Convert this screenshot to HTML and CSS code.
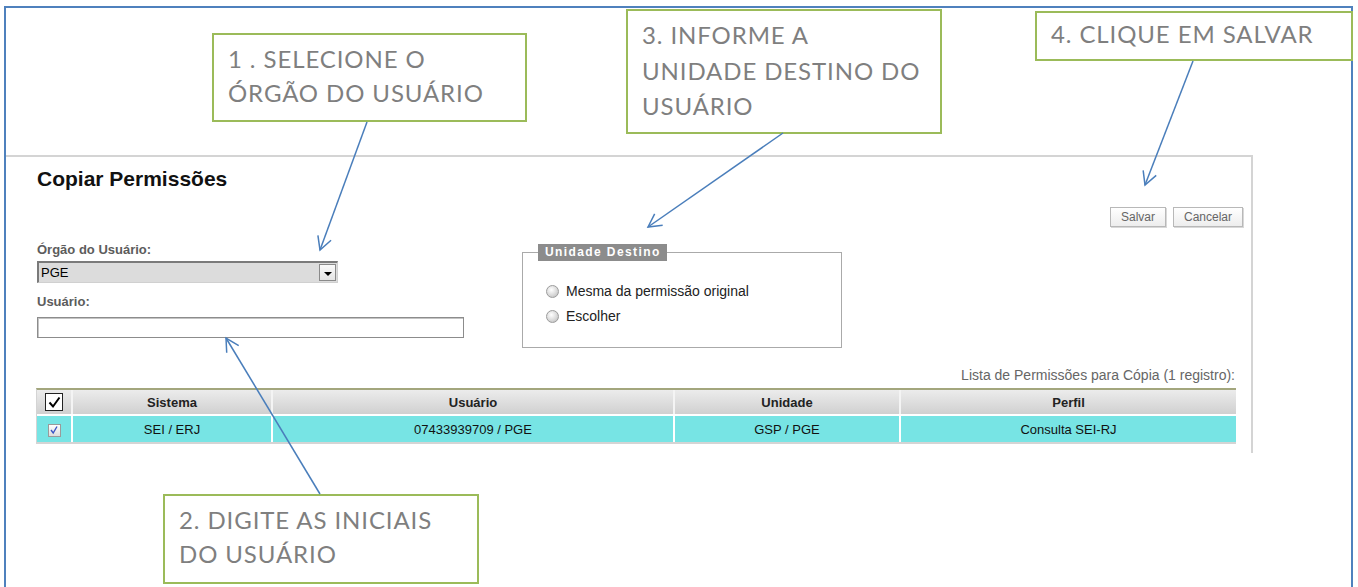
FILE: index.html
```html
<!DOCTYPE html>
<html lang="pt-BR">
<head>
  <meta charset="UTF-8" />
  <title>Copiar Permissões</title>
  <link rel="stylesheet" href="styles.css">
</head>
<body>
  <div class="sheet">
    <div class="frame">
      <div class="page">
        <h1 class="title">Copiar Permissões</h1>

        <div class="top">
          <div class="fields">
            <label class="label">Órgão do Usuário:</label>
            <div class="select">
              <span class="select-value">PGE</span>
              <span class="select-btn"><span class="caret"></span></span>
            </div>
            <label class="label label-user">Usuário:</label>
            <input type="text" class="text-input" />
          </div>

          <fieldset class="destino">
            <legend>Unidade Destino</legend>
            <div class="option"><span class="radio"></span>Mesma da permissão original</div>
            <div class="option"><span class="radio"></span>Escolher</div>
          </fieldset>

          <div class="actions">
            <button class="btn">Salvar</button>
            <button class="btn">Cancelar</button>
          </div>
        </div>

        <div class="caption">Lista de Permissões para Cópia (1 registro):</div>

        <table class="grid">
          <thead>
            <tr>
              <th class="col-check">
                <span class="check-big">
                  <svg width="15" height="15" viewBox="0 0 15 15"><path d="M2.5 7.5 L6 11.5 L12.5 2.5" fill="none" stroke="#000" stroke-width="2"/></svg>
                </span>
              </th>
              <th class="col-sistema">Sistema</th>
              <th class="col-usuario">Usuário</th>
              <th class="col-unidade">Unidade</th>
              <th>Perfil</th>
            </tr>
          </thead>
          <tbody>
            <tr>
              <td>
                <span class="check-small">
                  <svg width="10" height="10" viewBox="0 0 10 10"><path d="M2 5 L4.2 8 L8 1.5" fill="none" stroke="#3b55c4" stroke-width="1.4"/></svg>
                </span>
              </td>
              <td>SEI / ERJ</td>
              <td>07433939709 / PGE</td>
              <td>GSP / PGE</td>
              <td>Consulta SEI-RJ</td>
            </tr>
          </tbody>
        </table>
      </div>
    </div>

    <!-- notas do tutorial por cima da tela -->
    <div class="callout c1">1 . SELECIONE O<br>ÓRGÃO DO USUÁRIO</div>
    <div class="callout c2">2. DIGITE AS INICIAIS<br>DO USUÁRIO</div>
    <div class="callout c3">3. INFORME A<br>UNIDADE DESTINO DO<br>USUÁRIO</div>
    <div class="callout c4">4. CLIQUE EM SALVAR</div>

    <svg class="arrows" width="1358" height="587" viewBox="0 0 1358 587">
      <defs>
        <marker id="head" markerUnits="userSpaceOnUse" markerWidth="16" markerHeight="18" refX="14" refY="8" orient="auto">
          <path d="M1 1 L14 8 L1 15" fill="none" stroke="#4a7ebb" stroke-width="1.5"/>
        </marker>
      </defs>
      <line x1="367" y1="122" x2="320" y2="250" marker-end="url(#head)"/>
      <line x1="320" y1="494" x2="226" y2="338" marker-end="url(#head)"/>
      <line x1="783" y1="133" x2="648" y2="227" marker-end="url(#head)"/>
      <line x1="1193" y1="61" x2="1145" y2="185" marker-end="url(#head)"/>
    </svg>
  </div>
</body>
</html>
```

FILE: styles.css
```css
body {
  margin: 0;
  background: #fff;
  font-family: "Liberation Sans", Arial, sans-serif;
}

.sheet {
  position: relative;
  width: 1358px;
  height: 587px;
  overflow: hidden;
}

.frame {
  margin: 6px 5px 0 4px;
  height: 600px;
  border: 2px solid #4f81bd;
  border-bottom: none;
  box-sizing: border-box;
}

.page {
  margin-top: 147px;
  width: 1247px;
  height: 298px;
  box-sizing: border-box;
  padding: 10px 0 0 31px;
  border-top: 2px solid #d4d4d4;
  border-right: 2px solid #d4d4d4;
}

.title {
  margin: 0;
  font-size: 21px;
  line-height: 24px;
  font-weight: bold;
  color: #111;
}

.top {
  display: flex;
  align-items: flex-start;
}

/* campos da esquerda */
.fields {
  width: 428px;
  margin-top: 51px;
  display: flex;
  flex-direction: column;
  align-items: flex-start;
}

.label {
  font-size: 13px;
  line-height: 16px;
  font-weight: bold;
  color: #5c5c5c;
}

.label-user {
  margin-top: 11px;
}

.select {
  margin-top: 3px;
  width: 301px;
  height: 22px;
  box-sizing: border-box;
  display: flex;
  align-items: center;
  background: #dcdcdc;
  border-style: solid;
  border-width: 2px 1px 1px 2px;
  border-color: #7a7a7a #d0d0d0 #d0d0d0 #7a7a7a;
}

.select-value {
  flex: 1;
  padding-left: 2px;
  font-size: 13px;
  color: #000;
}

.select-btn {
  width: 17px;
  height: 17px;
  margin-right: 1px;
  box-sizing: border-box;
  display: flex;
  align-items: center;
  justify-content: center;
  background: linear-gradient(#fafafa, #e4e4e4);
  border: 1px solid #8a8a8a;
}

.caret {
  width: 0;
  height: 0;
  margin-top: 2px;
  border-left: 4px solid transparent;
  border-right: 4px solid transparent;
  border-top: 4px solid #000;
}

.text-input {
  margin: 7px 0 0 0;
  width: 427px;
  height: 21px;
  box-sizing: border-box;
  padding: 0 3px;
  border: 1px solid #8c8c8c;
  box-shadow: inset 1px 1px 0 #c4c4c4;
  font-family: inherit;
  font-size: 13px;
}

/* unidade destino */
.destino {
  margin: 53px 0 0 57px;
  width: 320px;
  box-sizing: border-box;
  padding: 0 0 22px 0;
  border: 1px solid #aaa;
  min-width: 0;
}

.destino legend {
  margin-left: 15px;
  padding: 0 6px 0 7px;
  height: 17px;
  line-height: 17px;
  background: #8c8c8c;
  color: #fff;
  font-size: 12px;
  font-weight: bold;
  letter-spacing: 1.4px;
}

.option {
  display: flex;
  align-items: center;
  gap: 7px;
  margin: 21px 0 0 23px;
  height: 18px;
  font-size: 14px;
  color: #222;
}

.option + .option {
  margin-top: 7px;
}

.radio {
  width: 13px;
  height: 13px;
  box-sizing: border-box;
  border-radius: 50%;
  border: 1px solid #9c9c9c;
  background: radial-gradient(circle at 40% 35%, #ffffff, #d6d6d6 60%, #b4b4b4);
}

.actions {
  margin: 16px 8px 0 auto;
  display: flex;
  gap: 7px;
}

.btn {
  height: 20px;
  padding: 0 10px;
  font-family: inherit;
  font-size: 12px;
  color: #666;
  background: linear-gradient(#ffffff, #ededed);
  border: 1px solid #b8b8b8;
  box-shadow: 1px 1px 0 #d8d8d8;
}

.caption {
  margin: 19px 16px 0 0;
  text-align: right;
  font-size: 14px;
  line-height: 17px;
  color: #666;
}

/* tabela */
.grid {
  margin: 4px 0 0 -1px;
  width: 1200px;
  table-layout: fixed;
  border-collapse: separate;
  border-spacing: 0;
  border-top: 2px solid #a3a67d;
  border-left: 1px solid #d4d4d4;
  border-bottom: 2px solid #d4d4d4;
  font-size: 13px;
}

.grid th {
  height: 24px;
  padding: 0;
  box-sizing: border-box;
  background: linear-gradient(#ececec, #d0d0d0);
  border-left: 2px solid #f4f4f4;
  font-weight: bold;
  color: #222;
}

.grid td {
  height: 28px;
  padding: 0;
  box-sizing: border-box;
  background: #77e4e4;
  border-left: 2px solid #fff;
  border-top: 2px solid #fff;
  text-align: center;
  color: #111;
}

.grid th:first-child,
.grid td:first-child {
  border-left: none;
}

.col-check { width: 34px; }
.col-sistema { width: 200px; }
.col-usuario { width: 402px; }
.col-unidade { width: 226px; }

.check-big {
  display: inline-flex;
  align-items: center;
  justify-content: center;
  width: 18px;
  height: 18px;
  box-sizing: border-box;
  border: 1.5px solid #222;
  background: #fff;
  vertical-align: middle;
}

.check-small {
  display: inline-flex;
  align-items: center;
  justify-content: center;
  width: 13px;
  height: 13px;
  box-sizing: border-box;
  border: 1px solid #9a9a9a;
  background: linear-gradient(#ffffff, #dcdcdc);
  vertical-align: middle;
}

/* notas */
.callout {
  position: absolute;
  box-sizing: border-box;
  border: 2px solid #9bbb59;
  background: #fff;
  padding-left: 14px;
  font-family: Lato, "Open Sans", sans-serif;
  font-size: 24px;
  letter-spacing: 0.9px;
  line-height: 34px;
  color: #7f7f7f;
}

.c1 { left: 212px; top: 33px; width: 315px; height: 89px; padding-top: 7px; }
.c2 { left: 163px; top: 494px; width: 316px; height: 90px; padding-top: 7px; }
.c3 { left: 626px; top: 9px; width: 316px; height: 125px; padding-top: 6px; line-height: 35.5px; }
.c4 { left: 1035px; top: 11px; width: 318px; height: 50px; padding-top: 4px; }

.arrows {
  position: absolute;
  left: 0;
  top: 0;
  pointer-events: none;
}

.arrows line {
  stroke: #4a7ebb;
  stroke-width: 1.5;
}
```
